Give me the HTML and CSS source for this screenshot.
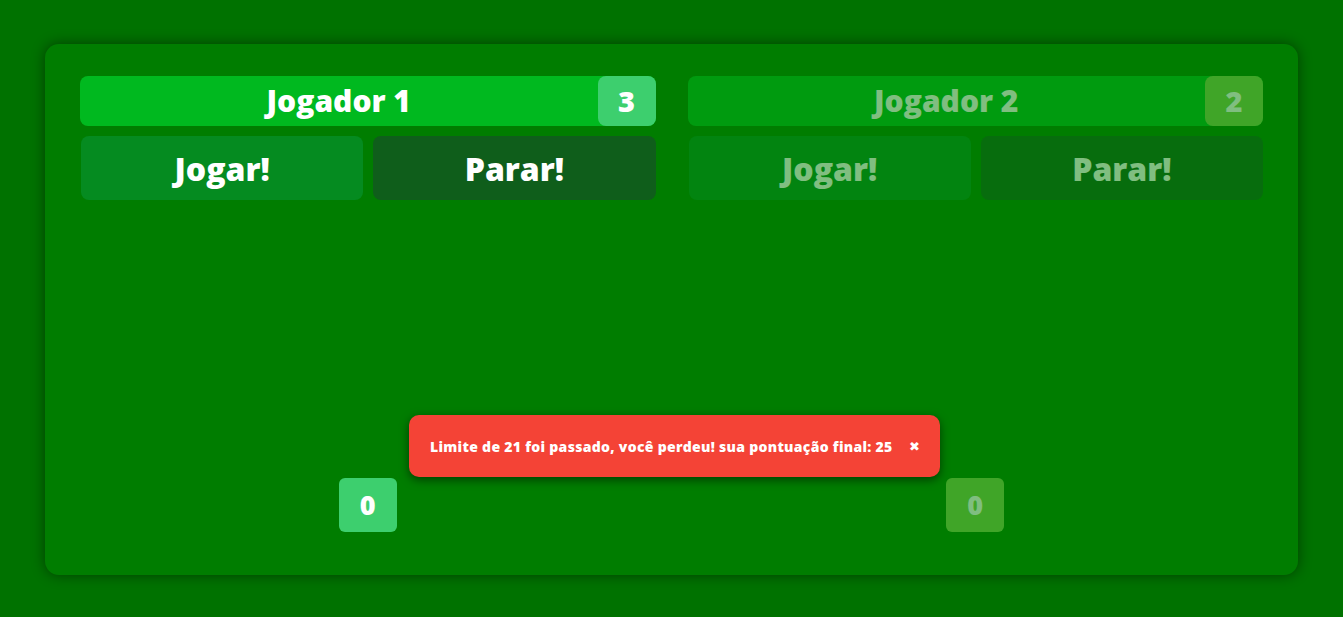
FILE: index.html
```html
<!DOCTYPE html>
<html lang="pt-BR">
<head>
    <meta charset="UTF-8" />
    <meta name="viewport" content="width=device-width, initial-scale=1.0" />
    <title>21</title>
    <link rel="stylesheet" href="styles.css">
</head>
<body>
<main class="table">
    <section class="player">
        <div class="player-head">
            <h2>Jogador 1</h2>
            <span class="wins">3</span>
        </div>
        <div class="actions">
            <button class="btn play">Jogar!</button>
            <button class="btn stop">Parar!</button>
        </div>
        <div class="score">0</div>
    </section>
    <section class="player inactive">
        <div class="player-head">
            <h2>Jogador 2</h2>
            <span class="wins">2</span>
        </div>
        <div class="actions">
            <button class="btn play">Jogar!</button>
            <button class="btn stop">Parar!</button>
        </div>
        <div class="score">0</div>
    </section>

    <div class="toast">
        <span>Limite de 21 foi passado, você perdeu! sua pontuação final: 25</span>
        <button class="toast-close">&#10006;</button>
    </div>
</main>
</body>
</html>
```

FILE: styles.css
```css
body {
  margin: 0;
  padding: 44px 45px;
  font-family: "Open Sans", "Noto Sans", sans-serif;
  background-color: #007200;
  color: white;
}

.table {
  position: relative;
  height: 531px;
  box-sizing: border-box;
  padding: 32px 35px 43px 35px;
  background-color: #007d00;
  border-radius: 14px;
  box-shadow: 0 0 14px rgba(0, 0, 0, 0.45);
  display: grid;
  grid-template-columns: 1fr 1fr;
  gap: 32px;
}

.player {
  display: flex;
  flex-direction: column;
  align-items: stretch;
}

.player.inactive {
  opacity: 0.5;
}

.player-head {
  display: flex;
  height: 50px;
  background-color: #00b91f;
  border-radius: 8px;
}

.player-head h2 {
  flex: 1;
  margin: 0;
  text-align: center;
  font-size: 30px;
  font-weight: 800;
  line-height: 50px;
}

.wins {
  width: 58px;
  text-align: center;
  line-height: 50px;
  font-size: 29px;
  font-weight: 800;
  background-color: #3dcf6e;
  border-radius: 8px;
}

.actions {
  display: flex;
  gap: 10px;
  margin-top: 10px;
}

.btn {
  flex: 1;
  height: 64px;
  border: none;
  border-radius: 8px;
  font-family: inherit;
  font-size: 32px;
  font-weight: 800;
  color: white;
  cursor: pointer;
}

.btn.play {
  background-color: #058b20;
  margin-left: 1px;
}

.btn.stop {
  background-color: #0f5e1b;
}

.score {
  margin-top: auto;
  align-self: center;
  width: 58px;
  height: 54px;
  line-height: 54px;
  text-align: center;
  font-size: 27px;
  font-weight: 800;
  background-color: #3dcf6e;
  border-radius: 6px;
}

.inactive .wins,
.inactive .score {
  background-color: #80cd50;
}

.toast {
  position: absolute;
  left: 364px;
  top: 371px;
  height: 62px;
  box-sizing: border-box;
  padding: 0 20px 0 21px;
  display: flex;
  align-items: center;
  gap: 16px;
  background-color: #f44336;
  border-radius: 10px;
  box-shadow: 0 3px 10px rgba(0, 0, 0, 0.5);
  font-size: 14px;
  font-weight: 800;
  letter-spacing: 0.3px;
}

.toast-close {
  background: none;
  border: none;
  color: white;
  font-size: 13px;
  padding: 0;
  cursor: pointer;
}
```
